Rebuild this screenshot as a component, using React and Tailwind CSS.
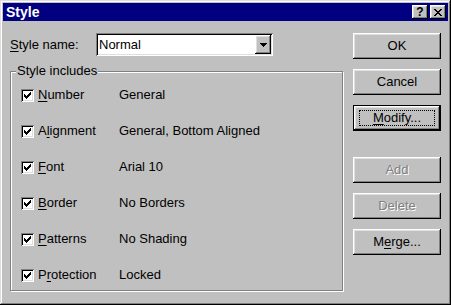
const raised =
  'shadow-[inset_-1px_-1px_#000,inset_1px_1px_#fff,inset_-2px_-2px_#808080,inset_2px_2px_#dfdfdf]';
const sunken =
  'shadow-[inset_1px_1px_#808080,inset_-1px_-1px_#fff,inset_2px_2px_#000,inset_-2px_-2px_#dfdfdf]';

const rows = [
  { pre: '', key: 'N', post: 'umber', value: 'General' },
  { pre: 'A', key: 'l', post: 'ignment', value: 'General, Bottom Aligned' },
  { pre: '', key: 'F', post: 'ont', value: 'Arial 10' },
  { pre: '', key: 'B', post: 'order', value: 'No Borders' },
  { pre: '', key: 'P', post: 'atterns', value: 'No Shading' },
  { pre: 'P', key: 'r', post: 'otection', value: 'Locked' },
];

const Checkbox = () => (
  <div className={`flex h-[13px] w-[13px] shrink-0 items-center justify-center bg-white ${sunken}`}>
    <svg width="7" height="7" viewBox="0 0 7 7" shapeRendering="crispEdges">
      <path
        d="M0 2h1v3h-1zM1 3h1v3h-1zM2 4h1v3h-1zM3 3h1v3h-1zM4 2h1v3h-1zM5 1h1v3h-1zM6 0h1v3h-1z"
        fill="#000"
      />
    </svg>
  </div>
);

const Button = ({ children, disabled, isDefault }) => (
  <button
    className={`relative h-[26px] w-[88px] bg-[#c0c0c0] text-[13px] ${
      isDefault ? 'border border-black' : ''
    } ${disabled ? 'text-[#808080] [text-shadow:1px_1px_#fff]' : 'text-black'}`}
  >
    <div className={`flex h-full w-full items-center justify-center ${raised}`}>
      {isDefault ? (
        <div className="flex h-[16px] w-[76px] items-center justify-center border border-dotted border-black">
          {children}
        </div>
      ) : (
        children
      )}
    </div>
  </button>
);

const TitleButton = ({ children }) => (
  <div
    className={`flex h-[14px] w-[16px] items-center justify-center bg-[#c0c0c0] text-[12px] font-bold leading-none text-black ${raised}`}
  >
    {children}
  </div>
);

export default function App() {
  return (
    <div
      className="h-[305px] w-[451px] overflow-hidden bg-[#c0c0c0] p-[3px] text-black shadow-[inset_-1px_-1px_#000,inset_1px_1px_#dfdfdf,inset_-2px_-2px_#808080,inset_2px_2px_#fff]"
      style={{ fontFamily: '"Liberation Sans", Arial, sans-serif' }}
    >
      <div className="flex h-[18px] items-center justify-between bg-[#000080] pl-[3px] pr-[2px]">
        <span className="text-[14px] font-bold leading-none text-white">Style</span>
        <div className="flex gap-[2px]">
          <TitleButton>?</TitleButton>
          <TitleButton>
            <svg width="8" height="7" viewBox="0 0 8 7" shapeRendering="crispEdges">
              <path
                d="M0 0h2v1h-2zM6 0h2v1h-2zM1 1h2v1h-2zM5 1h2v1h-2zM2 2h4v1h-4zM3 3h2v1h-2zM2 4h4v1h-4zM1 5h2v1h-2zM5 5h2v1h-2zM0 6h2v1h-2zM6 6h2v1h-2z"
                fill="#000"
              />
            </svg>
          </TitleButton>
        </div>
      </div>

      <div className="flex text-[13px]">
        <div className="flex w-[343px] flex-col pl-[7px]">
          <div className="mt-[12px] flex h-[23px] items-center">
            <span className="w-[86px]">
              <u className="underline-offset-2">S</u>tyle name:
            </span>
            <div className={`flex h-[23px] w-[177px] items-center bg-white pl-[3px] pr-[2px] ${sunken}`}>
              <span className="flex-1">Normal</span>
              <div className={`flex h-[19px] w-[16px] items-center justify-center bg-[#c0c0c0] ${raised}`}>
                <svg width="7" height="4" viewBox="0 0 7 4" shapeRendering="crispEdges">
                  <path d="M0 0h7v1h-7zM1 1h5v1h-5zM2 2h3v1h-3zM3 3h1v1h-1z" fill="#000" />
                </svg>
              </div>
            </div>
          </div>

          <div className="relative mt-[15px] h-[220px] w-[333px] border border-[#808080] shadow-[1px_1px_0_#fff,inset_1px_1px_0_#fff]">
            <span className="absolute left-[5px] top-[-9px] bg-[#c0c0c0] px-[1px] leading-[16px]">
              Style includes
            </span>
            <div className="flex flex-col pl-[10px] pt-[5px]">
              {rows.map((r) => (
                <div key={r.value} className="flex h-[36px] items-center">
                  <Checkbox />
                  <span className="w-[85px] pl-[4px]">
                    {r.pre}
                    <u className="underline-offset-2">{r.key}</u>
                    {r.post}
                  </span>
                  <span>{r.value}</span>
                </div>
              ))}
            </div>
          </div>
        </div>

        <div className="ml-[7px] mt-[12px] flex flex-col gap-[10px]">
          <Button>OK</Button>
          <Button>Cancel</Button>
          <Button isDefault>
            <span>
              <u className="underline-offset-2">M</u>odify...
            </span>
          </Button>
          <div className="h-[6px]" />
          <Button disabled>Add</Button>
          <Button disabled>Delete</Button>
          <Button>
            <span>
              M<u className="underline-offset-2">e</u>rge...
            </span>
          </Button>
        </div>
      </div>
    </div>
  );
}
